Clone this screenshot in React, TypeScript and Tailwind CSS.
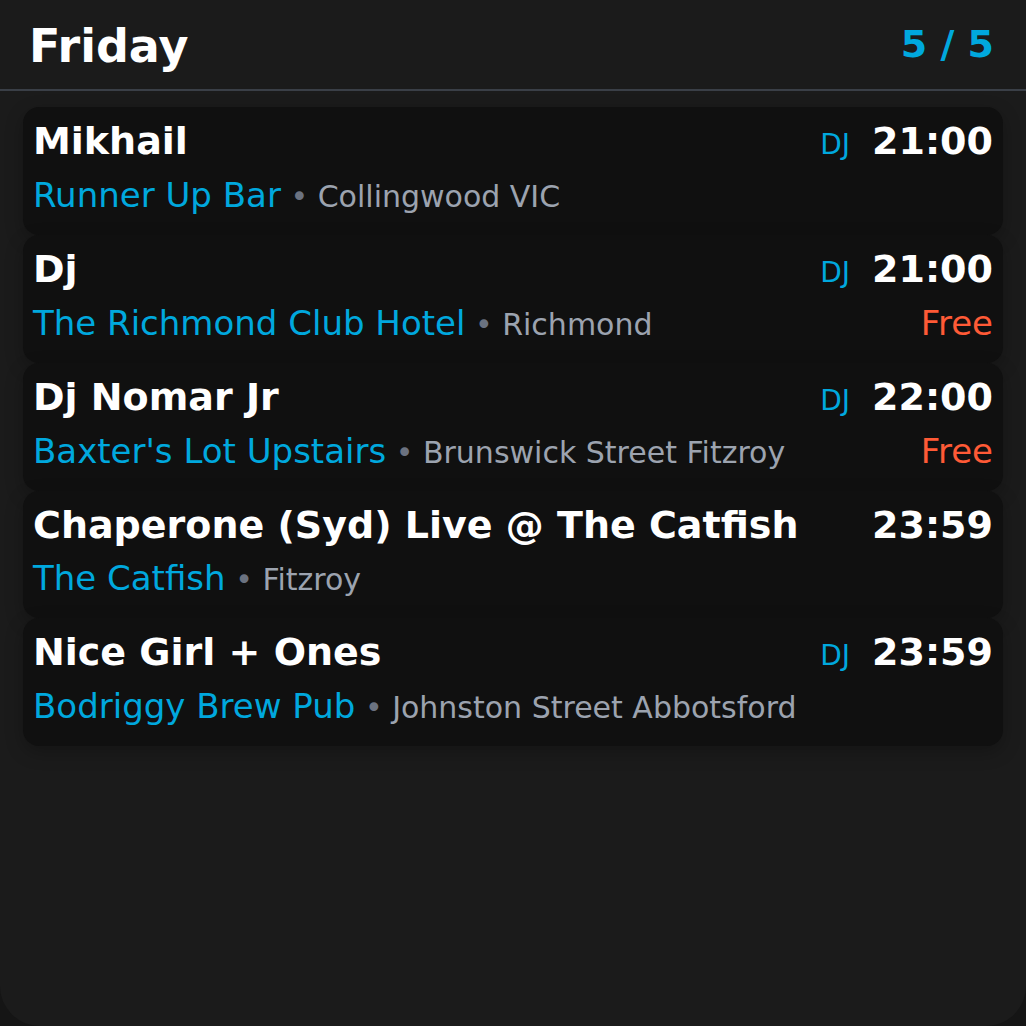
import React from "react";

type Gig = {
  title: string;
  venue: string;
  area: string;
  time: string;
  dj?: boolean;
  free?: boolean;
};

const gigs: Gig[] = [
  { title: "Mikhail", venue: "Runner Up Bar", area: "Collingwood VIC", time: "21:00", dj: true },
  { title: "Dj", venue: "The Richmond Club Hotel", area: "Richmond", time: "21:00", dj: true, free: true },
  { title: "Dj Nomar Jr", venue: "Baxter's Lot Upstairs", area: "Brunswick Street Fitzroy", time: "22:00", dj: true, free: true },
  { title: "Chaperone (Syd) Live @ The Catfish", venue: "The Catfish", area: "Fitzroy", time: "23:59" },
  { title: "Nice Girl + Ones", venue: "Bodriggy Brew Pub", area: "Johnston Street Abbotsford", time: "23:59", dj: true },
];

function GigCard({ gig }: { gig: Gig }) {
  return (
    <div className="bg-[#101010] rounded-2xl px-2.5 pt-3 pb-4 flex flex-col gap-[8px] shadow-[0_6px_18px_rgba(0,0,0,0.25)]">
      <div className="flex items-baseline justify-between">
        <span className="text-[38px] leading-[1.2] font-bold text-white">{gig.title}</span>
        <div className="flex items-baseline gap-[22px]">
          {gig.dj && <span className="text-[28px] text-[#00a8de]">DJ</span>}
          <span className="text-[38px] leading-[1.2] font-bold text-white">{gig.time}</span>
        </div>
      </div>
      <div className="flex items-baseline justify-between">
        <div className="flex items-baseline">
          <span className="text-[34px] leading-[1.2] text-[#00a8de]">{gig.venue}</span>
          <span className="text-[30px] text-[#6b7280] whitespace-pre"> • </span>
          <span className="text-[30px] text-[#9ca3af]">{gig.area}</span>
        </div>
        {gig.free && <span className="text-[34px] leading-[1.2] text-[#ff5a36]">Free</span>}
      </div>
    </div>
  );
}

export default function App() {
  return (
    <div className="bg-[#151515] h-screen" style={{ fontFamily: '"DejaVu Sans", sans-serif' }}>
      <div className="bg-[#1b1b1b] h-full rounded-b-[40px] flex flex-col">
        <header className="h-[91px] flex items-center justify-between pl-[29px] pr-8 border-b-2 border-[#3a3f47]">
          <h1 className="text-[46px] font-bold text-white pt-1">Friday</h1>
          <span className="text-[38px] font-bold text-[#00a8de]">5 / 5</span>
        </header>
        <div className="flex flex-col px-[23px] pt-4">
          {gigs.map((g) => (
            <GigCard key={g.title} gig={g} />
          ))}
        </div>
      </div>
    </div>
  );
}
